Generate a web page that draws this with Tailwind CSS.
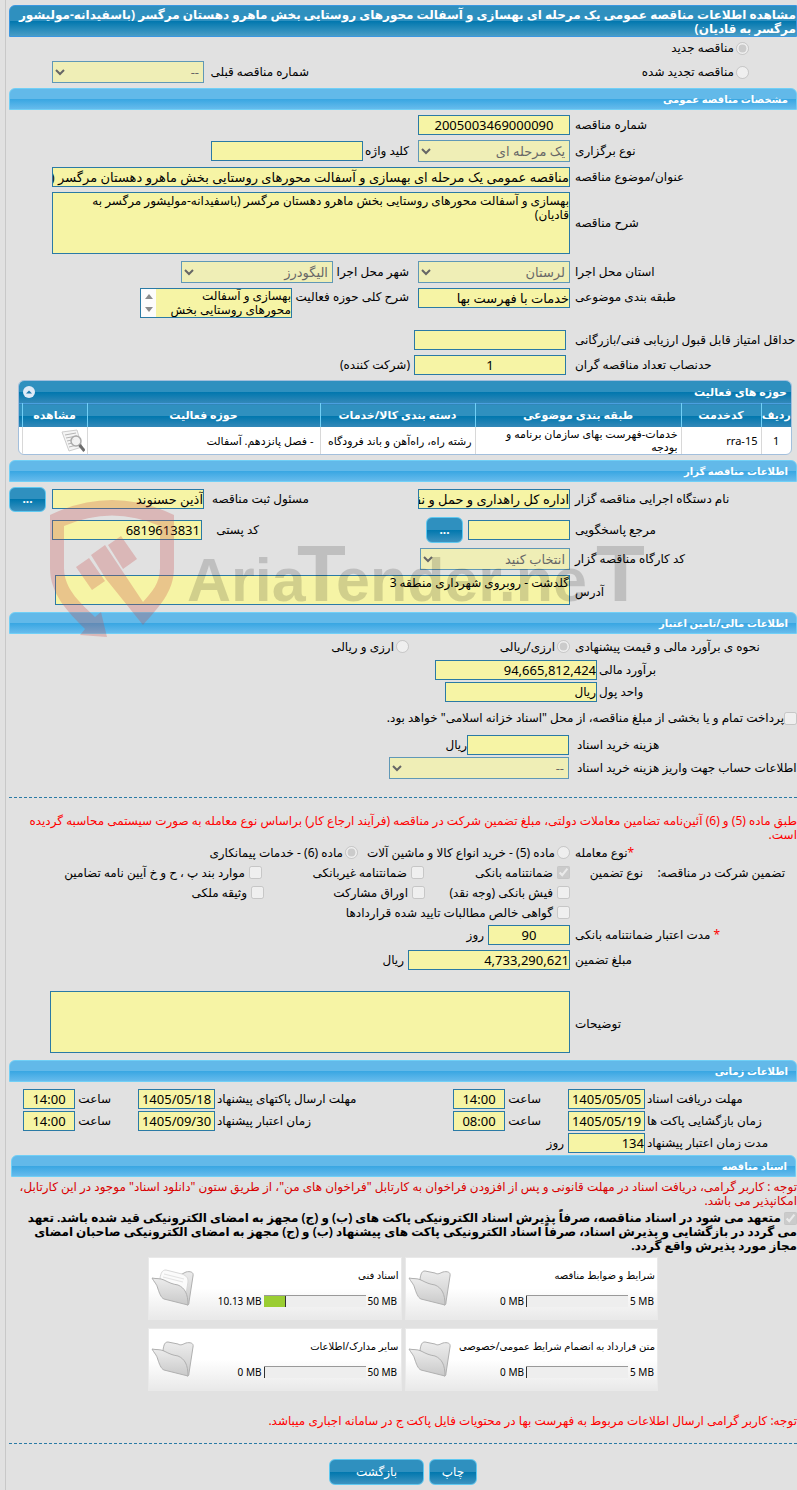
<!DOCTYPE html>
<html lang="fa" dir="rtl">
<head>
	<meta charset="utf-8">
	<meta name="viewport" content="width=device-width, initial-scale=1">
	<title>مشاهده اطلاعات مناقصه عمومی</title>
	<script src="https://cdn.jsdelivr.net/npm/@tailwindcss/browser@4"></script>
</head>
<body class="bg-[#e1e1e1] text-black text-[12px] leading-[14px] font-['Noto_Sans','DejaVu_Sans',sans-serif] overflow-x-hidden">
	<main class="relative min-h-screen ml-[5px] pl-[3px] pt-[5px] border-l border-[#c8c8c8]">

		<h1 class="min-h-[32px] pt-[2px] rounded-tl-md border border-[#3b97e0] bg-[linear-gradient(#2f90bf_0,#2f90bf_50%,#0077ae_50%,#4a9dc6_100%)] text-white text-[12px] font-bold">مشاهده اطلاعات مناقصه عمومی یک مرحله ای بهسازی و آسفالت محورهای روستایی بخش ماهرو دهستان مرگسر (باسفیدانه-مولیشور مرگسر به قادیان)</h1>

		<!-- tender kind -->
		<div class="pt-px pb-[5px]">
			<div class="flex items-center h-[20px] ps-[48px]">
				<input id="kind_new" name="kind" type="radio" class="w-[13px] h-[13px]" checked disabled>
				<label for="kind_new" class="ms-[2px]">مناقصه جدید</label>
			</div>
			<div class="flex items-center mt-[3px] ps-[48px]">
				<input id="kind_renewed" name="kind" type="radio" class="w-[13px] h-[13px]" disabled>
				<label for="kind_renewed" class="ms-[2px] w-[425px]">مناقصه تجدید شده</label>
				<label for="prev_no" class="w-[100px] whitespace-nowrap">شماره مناقصه قبلی</label>
				<select id="prev_no" class="ms-[5px] w-[152px] h-[22px] bg-[#f6f4a5] border border-[#2a7aa5] text-[13px] text-[#333] opacity-70" disabled><option>--</option></select>
			</div>
		</div>

		<!-- general -->
		<section>
			<h2 class="h-[22px] px-2 rounded-t-md border border-[#70cff6] bg-[linear-gradient(#62b9e9_0,#62b9e9_50%,#38a6e2_50%,#66bbec_100%)] text-white text-[10px] font-bold leading-[20px]">مشخصات مناقصه عمومی</h2>
			<div class="flex flex-col gap-[5px] pt-[5px]">
				<div class="flex items-center">
					<label for="tender_no" class="w-[222px] text-left">شماره مناقصه</label>
					<input id="tender_no" type="text" value="2005003469000090" class="ms-[5px] w-[152px] h-[20px] bg-[#f6f4a5] border border-[#2a7aa5] text-[13px] text-center" readonly>
				</div>
				<div class="flex items-center">
					<label for="tender_type" class="w-[222px] text-left">نوع برگزاری</label>
					<select id="tender_type" class="ms-[5px] w-[152px] h-[22px] bg-[#f6f4a5] border border-[#2a7aa5] text-[13px] text-[#333] opacity-70" disabled><option>یک مرحله ای</option></select>
					<label for="keyword" class="ms-[9px] w-[46px] whitespace-nowrap">کلید واژه</label>
					<input id="keyword" type="text" class="w-[152px] h-[20px] bg-[#f6f4a5] border border-[#2a7aa5] text-[13px]" readonly>
				</div>
				<div class="flex items-center">
					<label for="subject" class="w-[222px] text-left">عنوان/موضوع مناقصه</label>
					<input id="subject" type="text" value="مناقصه عمومی یک مرحله ای بهسازی و آسفالت محورهای روستایی بخش ماهرو دهستان مرگسر (باسفیدانه-مولیشور مرگسر به قادیان)" class="ms-[5px] w-[518px] h-[20px] bg-[#f6f4a5] border border-[#2a7aa5] text-[13px]" readonly>
				</div>
				<div class="flex items-center">
					<label for="description" class="w-[222px] text-left">شرح مناقصه</label>
					<textarea id="description" class="block ms-[5px] w-[518px] h-[62px] pt-px bg-[#f6f4a5] border border-[#2a7aa5] text-[12px] leading-[14px] resize-none" readonly>بهسازی و آسفالت محورهای روستایی بخش ماهرو دهستان مرگسر (باسفیدانه-مولیشور مرگسر به
قادیان)</textarea>
				</div>
				<div class="flex items-center pt-[2px]">
					<label for="province" class="w-[222px] text-left">استان محل اجرا</label>
					<select id="province" class="ms-[5px] w-[152px] h-[22px] bg-[#f6f4a5] border border-[#2a7aa5] text-[13px] text-[#333] opacity-70" disabled><option>لرستان</option></select>
					<label for="city" class="ms-[9px] w-[76px] whitespace-nowrap">شهر محل اجرا</label>
					<select id="city" class="w-[152px] h-[22px] bg-[#f6f4a5] border border-[#2a7aa5] text-[13px] text-[#333] opacity-70" disabled><option>الیگودرز</option></select>
				</div>
				<div class="flex items-start">
					<label for="category" class="w-[222px] pt-[2px] text-left">طبقه بندی موضوعی</label>
					<input id="category" type="text" value="خدمات با فهرست بها" class="ms-[5px] w-[152px] h-[20px] bg-[#f6f4a5] border border-[#2a7aa5] text-[13px]" readonly>
					<label for="activity" class="ms-[9px] w-[117px] pt-[2px] whitespace-nowrap">شرح کلی حوزه فعالیت</label>
					<div class="flex w-[152px] h-[30px] border border-[#2a7aa5]">
						<textarea id="activity" class="grow w-0 bg-[#f6f4a5] text-[12px] leading-[14px] overflow-hidden resize-none" readonly>بهسازی و آسفالت محورهای روستایی بخش</textarea>
						<div class="flex flex-col items-center justify-between w-[15px] py-[5px] bg-[#fcfcfc]">
							<svg width="8" height="5" viewBox="0 0 8 5"><path d="M0 5 4 0l4 5z" fill="#8b8b8b"/></svg>
							<svg width="8" height="5" viewBox="0 0 8 5"><path d="M0 0h8L4 5z" fill="#8b8b8b"/></svg>
						</div>
					</div>
				</div>
				<div class="flex items-center pt-[7px]">
					<label for="min_score" class="w-[222px] text-left whitespace-nowrap">حداقل امتیاز قابل قبول ارزیابی فنی/بازرگانی</label>
					<input id="min_score" type="text" class="ms-[9px] w-[152px] h-[20px] bg-[#f6f4a5] border border-[#2a7aa5] text-[13px]" readonly>
				</div>
				<div class="flex items-center">
					<label for="quorum" class="w-[222px] text-left">حدنصاب تعداد مناقصه گران</label>
					<input id="quorum" type="text" value="1" class="ms-[9px] w-[152px] h-[20px] bg-[#f6f4a5] border border-[#2a7aa5] text-[13px] text-center" readonly>
					<span class="ms-1">(شرکت کننده)</span>
				</div>
			</div>

			<!-- activity fields -->
			<div class="mt-[5px] ml-[9px] mr-[5px] mb-[5px] rounded-md border border-[#a3bfdc] bg-white overflow-hidden">
				<div class="flex items-center justify-between h-[22px] px-1 bg-[linear-gradient(#2f90bf_0,#2f90bf_50%,#0077ae_50%,#3388b8_100%)]">
					<h3 class="text-white text-[11px] font-bold">حوزه های فعالیت</h3>
					<button type="button" aria-label="بستن" class="w-[12px] h-[12px]">
						<svg class="block" width="12" height="12" viewBox="0 0 12 12"><circle cx="6" cy="6" r="6" fill="#dfeaf7"/><path d="M3 7.500 6 4.500l3 3z" fill="#1c78ac"/></svg>
					</button>
				</div>
				<table class="w-full table-fixed text-[11px]">
					<colgroup><col class="w-[30px]"><col class="w-[80px]"><col class="w-[206px]"><col class="w-[155px]"><col><col class="w-[65px]"><col class="w-[3px]"></colgroup>
					<thead>
						<tr class="h-[23px] bg-[linear-gradient(#2f90bf_0,#2f90bf_50%,#0077ae_50%,#3388b8_100%)] text-white border-t border-[#4a9fe0]">
							<th class="border-l border-[#70cff6] whitespace-nowrap">ردیف</th>
							<th class="border-l border-[#70cff6]">کدخدمت</th>
							<th class="border-l border-[#70cff6]">طبقه بندی موضوعی</th>
							<th class="border-l border-[#70cff6] whitespace-nowrap">دسته بندی کالا/خدمات</th>
							<th class="border-l border-[#70cff6]">حوزه فعالیت</th>
							<th class="border-l border-[#70cff6]">مشاهده</th>
							<th></th>
						</tr>
					</thead>
					<tbody>
						<tr class="h-[27px] leading-[13px]">
							<td class="border-l border-[#d8d8d8] text-center">1</td>
							<td class="border-l border-[#d8d8d8] px-[3px]">rra-15</td>
							<td class="border-l border-[#d8d8d8] px-[3px]">خدمات-فهرست بهای سازمان برنامه و بودجه</td>
							<td class="border-l border-[#d8d8d8] px-[3px] whitespace-nowrap">رشته راه، راه‌آهن و باند فرودگاه</td>
							<td class="border-l border-[#d8d8d8] px-[6px]">- فصل پانزدهم. آسفالت</td>
							<td class="border-l border-[#d8d8d8] px-[2px]">
								<svg class="block" width="24" height="23" viewBox="0 0 24 23"><path d="M1 3 16 1l5 17-13 4z" fill="#f4f4f4" stroke="#ccc"/><path d="M4 6l11-2M5 9l11-2M6 12l7-1.500M7 15l5-1M8 18l6-1.500" stroke="#b5b5b5" fill="none"/><circle cx="15" cy="12" r="5" fill="#f1f1f1" fill-opacity=".8" stroke="#aaa" stroke-width="1.500"/><path d="m18.500 16 5 6" stroke="#6d6d6d" stroke-width="3"/></svg>
							</td>
							<td></td>
						</tr>
					</tbody>
				</table>
			</div>
		</section>

		<!-- owner -->
		<section>
			<h2 class="h-[22px] px-2 rounded-t-md border border-[#70cff6] bg-[linear-gradient(#62b9e9_0,#62b9e9_50%,#38a6e2_50%,#66bbec_100%)] text-white text-[10px] font-bold leading-[20px]">اطلاعات مناقصه گزار</h2>
			<div class="flex flex-col gap-[5px] pt-[5px] pb-[7px]">
				<div class="flex items-center">
					<label for="org" class="w-[222px] text-left">نام دستگاه اجرایی مناقصه گزار</label>
					<input id="org" type="text" value="اداره کل راهداری و حمل و نقل جاده ای" class="ms-[5px] w-[152px] h-[20px] bg-[#f6f4a5] border border-[#2a7aa5] text-[13px]" readonly>
					<label for="officer" class="ms-[109px] w-[105px] whitespace-nowrap">مسئول ثبت مناقصه</label>
					<input id="officer" type="text" value="آذین حسنوند" class="w-[152px] h-[20px] bg-[#f6f4a5] border border-[#2a7aa5] text-[13px]" readonly>
					<button type="button" class="ms-[6px] w-[37px] h-[25px] rounded-md border border-[#5fc8f0] bg-[linear-gradient(#2f90bf_0,#2f90bf_50%,#0077ae_50%,#3d93c0_100%)] text-white font-bold">...</button>
				</div>
				<div class="flex items-center">
					<label for="contact" class="w-[222px] text-left">مرجع پاسخگویی</label>
					<input id="contact" type="text" class="ms-[5px] w-[102px] h-[20px] bg-[#f6f4a5] border border-[#2a7aa5] text-[13px]" readonly>
					<button type="button" class="ms-[5px] w-[37px] h-[26px] rounded-md border border-[#5fc8f0] bg-[linear-gradient(#2f90bf_0,#2f90bf_50%,#0077ae_50%,#3d93c0_100%)] text-white font-bold">...</button>
					<label for="postcode" class="ms-[167px] w-[57px]">کد پستی</label>
					<input id="postcode" type="text" value="6819613831" class="w-[150px] h-[20px] px-px bg-[#f6f4a5] border border-[#2a7aa5] text-[13px]" readonly>
				</div>
				<div class="flex items-center">
					<label for="workshop" class="w-[222px] text-left">کد کارگاه مناقصه گزار</label>
					<select id="workshop" class="ms-[5px] w-[150px] h-[22px] bg-[#f6f4a5] border border-[#2a7aa5] text-[13px] text-[#333] opacity-70" disabled><option>انتخاب کنید</option></select>
				</div>
				<div class="flex items-center">
					<label for="address" class="w-[222px] pt-1 text-left">آدرس</label>
					<textarea id="address" class="block ms-[5px] w-[515px] h-[30px] bg-[#f6f4a5] border border-[#2a7aa5] text-[12px] leading-[14px] resize-none" readonly>گلدشت - روبروی شهرداری منطقه 3</textarea>
				</div>
			</div>
		</section>

		<!-- finance -->
		<section>
			<h2 class="h-[22px] px-2 rounded-t-md border border-[#70cff6] bg-[linear-gradient(#62b9e9_0,#62b9e9_50%,#38a6e2_50%,#66bbec_100%)] text-white text-[10px] font-bold leading-[20px]">اطلاعات مالی/تامین اعتبار</h2>
			<div class="flex items-center h-[26px]">
				<span class="w-[222px] text-left whitespace-nowrap">نحوه ی برآورد مالی و قیمت پیشنهادی</span>
				<input id="cur_any" name="currency" type="radio" class="ms-[5px] w-[13px] h-[13px]" checked disabled>
				<label for="cur_any" class="ms-[2px] w-[146px]">ارزی/ریالی</label>
				<input id="cur_both" name="currency" type="radio" class="w-[13px] h-[13px]" disabled>
				<label for="cur_both" class="ms-[2px]">ارزی و ریالی</label>
			</div>
			<div class="flex items-center">
				<label for="estimate" class="w-[198px] text-left">برآورد مالی</label>
				<input id="estimate" type="text" value="94,665,812,424" class="ms-[2px] w-[162px] h-[20px] bg-[#f6f4a5] border border-[#2a7aa5] text-[13px]" readonly>
			</div>
			<div class="flex items-center mt-[2px]">
				<label for="unit" class="w-[198px] text-left">واحد پول</label>
				<input id="unit" type="text" value="ریال" class="ms-[2px] w-[152px] h-[20px] bg-[#f6f4a5] border border-[#2a7aa5] text-[12px]" readonly>
			</div>
			<div class="flex items-center h-[33px]">
				<input id="treasury" type="checkbox" class="w-[13px] h-[13px]" disabled>
				<label for="treasury">پرداخت تمام و یا بخشی از مبلغ مناقصه، از محل "اسناد خزانه اسلامی" خواهد بود.</label>
			</div>
			<div class="flex items-center">
				<label for="doc_fee" class="w-[220px] text-left">هزینه خرید اسناد</label>
				<input id="doc_fee" type="text" class="ms-[8px] w-[102px] h-[20px] bg-[#f6f4a5] border border-[#2a7aa5] text-[13px]" readonly>
				<span>ریال</span>
			</div>
			<div class="flex items-center mt-[2px]">
				<label for="doc_account" class="w-[220px] text-left whitespace-nowrap">اطلاعات حساب جهت واریز هزینه خرید اسناد</label>
				<select id="doc_account" class="ms-[8px] w-[180px] h-[22px] bg-[#f6f4a5] border border-[#2a7aa5] text-[13px] text-[#333] opacity-70" disabled><option>--</option></select>
			</div>
			<hr class="mt-[18px] border-t border-dashed border-[#2a7aa5]">
			<p class="mt-4 text-[#f00]">طبق ماده (5) و (6) آئین‌نامه تضامین معاملات دولتی، مبلغ تضمین شرکت در مناقصه (فرآیند ارجاع کار) براساس نوع معامله به صورت سیستمی محاسبه گردیده است.</p>
			<div class="flex items-center h-[20px] mt-px">
				<span class="w-[222px] text-left"><span class="text-[#f00]">*</span>نوع معامله</span>
				<input id="deal_5" name="deal" type="radio" class="ms-[5px] w-[13px] h-[13px]" disabled>
				<label for="deal_5" class="ms-[2px] w-[197px] whitespace-nowrap">ماده (5) - خرید انواع کالا و ماشین آلات</label>
				<input id="deal_6" name="deal" type="radio" class="w-[13px] h-[13px]" checked disabled>
				<label for="deal_6" class="ms-[2px]">ماده (6) - خدمات پیمانکاری</label>
			</div>
			<div class="flex items-center h-[20px]">
				<span class="ms-3 w-[142px] whitespace-nowrap">تضمین شرکت در مناقصه:</span>
				<span class="w-[73px]">نوع تضمین</span>
				<input id="g_bank" type="checkbox" class="w-[13px] h-[13px]" checked disabled>
				<label for="g_bank" class="ms-1 w-[129px]">ضمانتنامه بانکی</label>
				<input id="g_nonbank" type="checkbox" class="w-[13px] h-[13px]" disabled>
				<label for="g_nonbank" class="ms-1 w-[145px]">ضمانتنامه غیربانکی</label>
				<input id="g_other" type="checkbox" class="w-[13px] h-[13px]" disabled>
				<label for="g_other" class="ms-1 whitespace-nowrap">موارد بند پ ، ح و خ آیین نامه تضامین</label>
			</div>
			<div class="flex items-center h-[20px] ps-[227px]">
				<input id="g_cash" type="checkbox" class="w-[13px] h-[13px]" disabled>
				<label for="g_cash" class="ms-1 w-[128px]">فیش بانکی (وجه نقد)</label>
				<input id="g_bond" type="checkbox" class="w-[13px] h-[13px]" disabled>
				<label for="g_bond" class="ms-1 w-[144px]">اوراق مشارکت</label>
				<input id="g_property" type="checkbox" class="w-[13px] h-[13px]" disabled>
				<label for="g_property" class="ms-1">وثیقه ملکی</label>
			</div>
			<div class="flex items-center h-[20px] ps-[227px]">
				<input id="g_claims" type="checkbox" class="w-[13px] h-[13px]" disabled>
				<label for="g_claims" class="ms-1">گواهی خالص مطالبات تایید شده قراردادها</label>
			</div>
			<div class="flex items-center mt-[2px]">
				<label for="g_days" class="w-[222px] text-left"><span class="text-[#f00]">*</span> مدت اعتبار ضمانتنامه بانکی</label>
				<input id="g_days" type="text" value="90" class="ms-[5px] w-[82px] h-[20px] bg-[#f6f4a5] border border-[#2a7aa5] text-[13px] text-center" readonly>
				<span class="ms-1">روز</span>
			</div>
			<div class="flex items-center mt-[5px]">
				<label for="g_amount" class="w-[222px] text-left">مبلغ تضمین</label>
				<input id="g_amount" type="text" value="4,733,290,621" class="ms-[5px] w-[162px] h-[20px] bg-[#f6f4a5] border border-[#2a7aa5] text-[13px]" readonly>
				<span class="ms-1">ریال</span>
			</div>
			<div class="flex items-center mt-[21px] mb-[7px]">
				<label for="notes" class="w-[222px] pt-1 text-left">توضیحات</label>
				<textarea id="notes" class="block ms-[5px] w-[520px] h-[62px] bg-[#f6f4a5] border border-[#2a7aa5] text-[12px] resize-none" readonly></textarea>
			</div>
		</section>

		<!-- dates -->
		<section>
			<h2 class="h-[22px] px-2 rounded-t-md border border-[#70cff6] bg-[linear-gradient(#62b9e9_0,#62b9e9_50%,#38a6e2_50%,#66bbec_100%)] text-white text-[10px] font-bold leading-[20px]">اطلاعات زمانی</h2>
			<div class="flex flex-col gap-[2px] pt-[7px] pb-[2px]">
				<div class="flex items-center">
					<label for="d_docs" class="w-[150px] text-left">مهلت دریافت اسناد</label>
					<input id="d_docs" type="text" value="1405/05/05" class="ms-[2px] w-[77px] h-[20px] bg-[#f6f4a5] border border-[#2a7aa5] text-[13px] text-center" readonly>
					<label for="t_docs" class="ms-[27px] w-[36px]">ساعت</label>
					<input id="t_docs" type="text" value="14:00" class="w-[52px] h-[20px] bg-[#f6f4a5] border border-[#2a7aa5] text-[13px] text-center" readonly>
					<label for="d_send" class="w-[236px] text-left">مهلت ارسال پاکتهای پیشنهاد</label>
					<input id="d_send" type="text" value="1405/05/18" class="ms-[2px] w-[77px] h-[20px] bg-[#f6f4a5] border border-[#2a7aa5] text-[13px] text-center" readonly>
					<label for="t_send" class="ms-[27px] w-[36px]">ساعت</label>
					<input id="t_send" type="text" value="14:00" class="w-[52px] h-[20px] bg-[#f6f4a5] border border-[#2a7aa5] text-[13px] text-center" readonly>
				</div>
				<div class="flex items-center">
					<label for="d_open" class="w-[150px] text-left">زمان بازگشایی پاکت ها</label>
					<input id="d_open" type="text" value="1405/05/19" class="ms-[2px] w-[77px] h-[20px] bg-[#f6f4a5] border border-[#2a7aa5] text-[13px] text-center" readonly>
					<label for="t_open" class="ms-[27px] w-[36px]">ساعت</label>
					<input id="t_open" type="text" value="08:00" class="w-[52px] h-[20px] bg-[#f6f4a5] border border-[#2a7aa5] text-[13px] text-center" readonly>
					<label for="d_valid" class="w-[236px] text-left">زمان اعتبار پیشنهاد</label>
					<input id="d_valid" type="text" value="1405/09/30" class="ms-[2px] w-[77px] h-[20px] bg-[#f6f4a5] border border-[#2a7aa5] text-[13px] text-center" readonly>
					<label for="t_valid" class="ms-[27px] w-[36px]">ساعت</label>
					<input id="t_valid" type="text" value="14:00" class="w-[52px] h-[20px] bg-[#f6f4a5] border border-[#2a7aa5] text-[13px] text-center" readonly>
				</div>
				<div class="flex items-center">
					<label for="valid_days" class="w-[150px] text-left">مدت زمان اعتبار پیشنهاد</label>
					<input id="valid_days" type="text" value="134" class="ms-[2px] w-[77px] h-[20px] bg-[#f6f4a5] border border-[#2a7aa5] text-[13px]" readonly>
					<span class="ms-1">روز</span>
				</div>
			</div>
		</section>

		<!-- documents -->
		<section>
			<h2 class="h-[22px] ml-[2px] mr-px px-2 rounded-t-md border border-[#70cff6] bg-[linear-gradient(#62b9e9_0,#62b9e9_50%,#38a6e2_50%,#66bbec_100%)] text-white text-[10px] font-bold leading-[20px]">اسناد مناقصه</h2>
			<p class="mt-[3px] text-[#d90000]">توجه : کاربر گرامی، دریافت اسناد در مهلت قانونی و پس از افزودن فراخوان به کارتابل "فراخوان های من"، از طریق ستون "دانلود اسناد" موجود در این کارتابل، امکانپذیر می باشد.</p>
			<div class="mt-[3px] -ml-1 font-bold">
				<input id="commit" type="checkbox" class="inline-block align-middle w-[13px] h-[13px]" checked disabled>
				<label for="commit">متعهد می شود در اسناد مناقصه، صرفاً پذیرش اسناد الکترونیکی پاکت های (ب) و (ج) مجهز به امضای الکترونیکی قید شده باشد. تعهد می&nbsp;گردد در بازگشایی و پذیرش اسناد، صرفاً اسناد الکترونیکی پاکت های پیشنهاد (ب) و (ج) مجهز به امضای الکترونیکی صاحبان امضای مجاز مورد پذیرش واقع گردد.</label>
			</div>

			<svg class="absolute w-0 h-0">
				<defs>
					<linearGradient id="paper" x1="0" y1="0" x2="0" y2="1"><stop offset="0" stop-color="#ececec"/><stop offset="1" stop-color="#c9c9c9"/></linearGradient>
				</defs>
				<symbol id="folder" viewBox="-1 -1 44 38">
					<path d="M11 9C12 3 13 1 16 1L26 3C29 5 31 3 34 2 38 1 42 2 41 6L37 32C37 35 36 35 35 35Z" fill="url(#paper)" stroke="#b0b0b0"/>
					<path d="M0 8C4 9 8 8 12 10 18 13 20 14 26 15 33 18 36 24 36 35L12 29C9 28 7 22 6 19 5 14 2 12 0 8Z" fill="url(#paper)" stroke="#b0b0b0"/>
				</symbol>
				<symbol id="folder-full" viewBox="-1 -1 44 38">
					<path d="M26 6C29 5 31 3 34 2 38 1 42 2 41 6L37 32C37 35 36 35 35 35L20 14Z" fill="url(#paper)" stroke="#b0b0b0"/>
					<path d="M8 8C9 3 10 0 14 0L30 4C35 6 36 8 36 12L33 30 12 24Z" fill="#fbfbfb" stroke="#d8d8d8"/>
					<path d="M12 4l20 5M11 7l20 5" fill="none" stroke="#e2e2e2"/>
					<path d="M0 8C4 9 8 8 12 10 18 13 20 14 26 15 33 18 36 24 36 35L12 29C9 28 7 22 6 19 5 14 2 12 0 8Z" fill="url(#paper)" stroke="#b0b0b0"/>
				</symbol>
			</svg>

			<div class="grid grid-cols-2 gap-x-[3px] gap-y-2 w-[510px] mx-auto mt-1 text-[10px]">
				<div class="flex items-center h-[63px] px-[2px] bg-linear-to-b from-white from-50% to-[#e9e9e9] border border-[#e9e9e9]">
					<div class="grow">
						<p class="whitespace-nowrap">شرایط و ضوابط مناقصه</p>
						<div class="flex items-center mt-3" dir="ltr">
							<span class="grow text-right">0 MB</span>
							<div class="w-[102px] h-[12px] mx-[2px] bg-[#eee] border-t border-[#999]"><div class="h-full border-r border-[#333]" style="width:1%"></div></div>
							<span class="w-[25px] whitespace-nowrap">5 MB</span>
						</div>
					</div>
					<svg class="w-[44px] h-[38px]"><use href="#folder"/></svg>
				</div>
				<div class="flex items-center h-[63px] px-[2px] bg-linear-to-b from-white from-50% to-[#e9e9e9] border border-[#e9e9e9]">
					<div class="grow">
						<p class="whitespace-nowrap">اسناد فنی</p>
						<div class="flex items-center mt-3" dir="ltr">
							<span class="grow text-right">10.13 MB</span>
							<div class="w-[102px] h-[12px] mx-[2px] bg-[#eee] border-t border-[#999]"><div class="h-full bg-[#9acd32] border-r border-[#333]" style="width:22%"></div></div>
							<span class="w-[31px] whitespace-nowrap">50 MB</span>
						</div>
					</div>
					<svg class="w-[44px] h-[38px]"><use href="#folder-full"/></svg>
				</div>
				<div class="flex items-center h-[63px] px-[2px] bg-linear-to-b from-white from-50% to-[#e9e9e9] border border-[#e9e9e9]">
					<div class="grow">
						<p class="whitespace-nowrap">متن قرارداد به انضمام شرایط عمومی/خصوصی</p>
						<div class="flex items-center mt-3" dir="ltr">
							<span class="grow text-right">0 MB</span>
							<div class="w-[102px] h-[12px] mx-[2px] bg-[#eee] border-t border-[#999]"><div class="h-full border-r border-[#333]" style="width:1%"></div></div>
							<span class="w-[25px] whitespace-nowrap">5 MB</span>
						</div>
					</div>
					<svg class="w-[44px] h-[38px]"><use href="#folder"/></svg>
				</div>
				<div class="flex items-center h-[63px] px-[2px] bg-linear-to-b from-white from-50% to-[#e9e9e9] border border-[#e9e9e9]">
					<div class="grow">
						<p class="whitespace-nowrap">سایر مدارک/اطلاعات</p>
						<div class="flex items-center mt-3" dir="ltr">
							<span class="grow text-right">0 MB</span>
							<div class="w-[102px] h-[12px] mx-[2px] bg-[#eee] border-t border-[#999]"><div class="h-full border-r border-[#333]" style="width:1%"></div></div>
							<span class="w-[31px] whitespace-nowrap">50 MB</span>
						</div>
					</div>
					<svg class="w-[44px] h-[38px]"><use href="#folder"/></svg>
				</div>
			</div>

			<p class="mt-[23px] text-[#f00]">توجه: کاربر گرامی ارسال اطلاعات مربوط به فهرست بها در محتویات فایل پاکت ج در سامانه اجباری میباشد.</p>
			<hr class="mt-[15px] border-t border-dashed border-[#2a7aa5]">
			<div class="flex justify-center gap-[5px] mt-[15px]">
				<button type="button" class="w-[48px] h-[26px] rounded-md border border-[#5fc8f0] bg-[linear-gradient(#2f90bf_0,#2f90bf_50%,#0077ae_50%,#3d93c0_100%)] text-white">چاپ</button>
				<button type="button" class="w-[95px] h-[26px] rounded-md border border-[#5fc8f0] bg-[linear-gradient(#2f90bf_0,#2f90bf_50%,#0077ae_50%,#3d93c0_100%)] text-white">بازگشت</button>
			</div>
		</section>

		<!-- watermark -->
		<svg class="absolute left-[44px] top-[500px] pointer-events-none" width="602" height="138" viewBox="50 500 602 138" direction="ltr">
			<path d="M50 515Q112 485 174 515V568C174 592 158 608 143 625L106 579 91 555 105 545 121 569 143 602C152 592 160 583 160 568V526Q112 505 64 526V568C64 590 82 604 95 617L101 612 107 637 80 635 85 629C68 612 50 594 50 568Z" fill="#c84646" fill-opacity=".27"/>
			<path d="M76 567 89 558 105 581 92 590ZM108 545 121 536 137 559 123 569Z" fill="#c84646" fill-opacity=".27"/>
			<g font-family="Liberation Sans" font-weight="bold" fill="#000" fill-opacity=".15">
				<text x="187" y="601" font-size="61">Aria<tspan x="297" font-size="80">T</tspan><tspan x="336">ender.ne</tspan><tspan x="596" font-size="80">T</tspan></text>
			</g>
		</svg>
	</main>
</body>
</html>
